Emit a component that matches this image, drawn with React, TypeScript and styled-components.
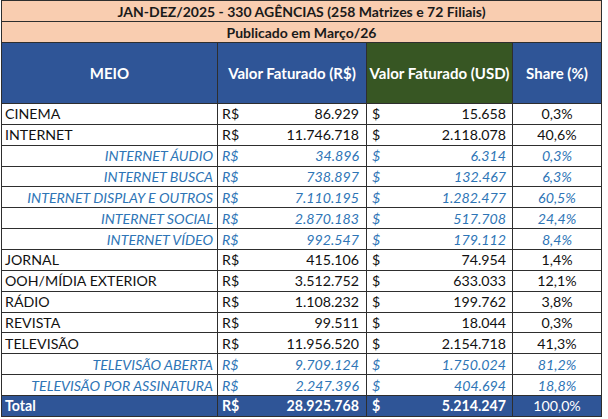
import React from "react";
import styled, { createGlobalStyle, css } from "styled-components";

const Global = createGlobalStyle`
  html, body { margin: 0; padding: 0; background: #ffffff; }
  body { font-family: Lato, "Liberation Sans", sans-serif; }
`;

type Row = { meio: string; brl: string; usd: string; share: string; sub?: boolean };

const rows: Row[] = [
  { meio: "CINEMA", brl: "86.929", usd: "15.658", share: "0,3%" },
  { meio: "INTERNET", brl: "11.746.718", usd: "2.118.078", share: "40,6%" },
  { meio: "INTERNET ÁUDIO", brl: "34.896", usd: "6.314", share: "0,3%", sub: true },
  { meio: "INTERNET BUSCA", brl: "738.897", usd: "132.467", share: "6,3%", sub: true },
  { meio: "INTERNET DISPLAY E OUTROS", brl: "7.110.195", usd: "1.282.477", share: "60,5%", sub: true },
  { meio: "INTERNET SOCIAL", brl: "2.870.183", usd: "517.708", share: "24,4%", sub: true },
  { meio: "INTERNET VÍDEO", brl: "992.547", usd: "179.112", share: "8,4%", sub: true },
  { meio: "JORNAL", brl: "415.106", usd: "74.954", share: "1,4%" },
  { meio: "OOH/MÍDIA EXTERIOR", brl: "3.512.752", usd: "633.033", share: "12,1%" },
  { meio: "RÁDIO", brl: "1.108.232", usd: "199.762", share: "3,8%" },
  { meio: "REVISTA", brl: "99.511", usd: "18.044", share: "0,3%" },
  { meio: "TELEVISÃO", brl: "11.956.520", usd: "2.154.718", share: "41,3%" },
  { meio: "TELEVISÃO ABERTA", brl: "9.709.124", usd: "1.750.024", share: "81,2%", sub: true },
  { meio: "TELEVISÃO POR ASSINATURA", brl: "2.247.396", usd: "404.694", share: "18,8%", sub: true },
];

const LINE = "#2e2e2e";

const Sheet = styled.div`
  margin-left: 1px;
  width: 600px;
  border-left: 1px solid ${LINE};
  border-top: 1px solid ${LINE};
  display: grid;
  grid-template-columns: 216px 149px 146px 89px;
  grid-template-rows: 21px 21px 61px repeat(15, 20.87px);
  font-size: 14.2px;
  color: #111;
`;

const Cell = styled.div<{ $bg?: string }>`
  box-sizing: border-box;
  border-right: 1px solid ${LINE};
  border-bottom: 1px solid ${LINE};
  background: ${(p) => p.$bg || "#ffffff"};
  display: flex;
  align-items: center;
  white-space: nowrap;
  overflow: hidden;
`;

const TitleCell = styled(Cell)`
  grid-column: 1 / -1;
  justify-content: center;
  background: #f9cdb0;
  font-weight: 700;
  font-size: 14px;
  color: #1a1a1a;
`;

const HeadCell = styled(Cell)`
  justify-content: center;
  color: #ffffff;
  font-weight: 700;
  font-size: 15px;
`;

const MeioCell = styled(Cell)<{ $sub?: boolean; $total?: boolean }>`
  padding: 0 4px 0 3px;
  justify-content: ${(p) => (p.$sub ? "flex-end" : "flex-start")};
  ${(p) =>
    p.$sub &&
    css`
      color: #2e75b6;
      font-style: italic;
    `}
  ${(p) =>
    p.$total &&
    css`
      color: #ffffff;
      font-weight: 700;
    `}
`;

const MoneyCell = styled(Cell)<{ $sub?: boolean; $total?: boolean; $l: number; $r: number }>`
  justify-content: space-between;
  padding: 0 ${(p) => p.$r}px 0 ${(p) => p.$l}px;
  ${(p) =>
    p.$sub &&
    css`
      color: #2e75b6;
      font-style: italic;
    `}
  ${(p) =>
    p.$total &&
    css`
      color: #ffffff;
      font-weight: 700;
    `}
`;

const ShareCell = styled(Cell)<{ $sub?: boolean; $total?: boolean }>`
  justify-content: center;
  ${(p) =>
    p.$sub &&
    css`
      color: #2e75b6;
      font-style: italic;
    `}
  ${(p) =>
    p.$total &&
    css`
      color: #ffffff;
    `}
`;

const BLUE = "#2f5597";
const GREEN = "#375623";

export default function App() {
  return (
    <>
      <Global />
      <Sheet>
        <TitleCell>JAN-DEZ/2025 - 330 AGÊNCIAS (258 Matrizes e 72 Filiais)</TitleCell>
        <TitleCell>Publicado em Março/26</TitleCell>
        <HeadCell $bg={BLUE}>MEIO</HeadCell>
        <HeadCell $bg={BLUE}>Valor Faturado (R$)</HeadCell>
        <HeadCell $bg={GREEN}>Valor Faturado (USD)</HeadCell>
        <HeadCell $bg={BLUE}>Share (%)</HeadCell>
        {rows.map((r) => (
          <React.Fragment key={r.meio}>
            <MeioCell $sub={r.sub}>{r.meio}</MeioCell>
            <MoneyCell $sub={r.sub} $l={4} $r={7}>
              <span>R$</span>
              <span>{r.brl}</span>
            </MoneyCell>
            <MoneyCell $sub={r.sub} $l={5} $r={6}>
              <span>$</span>
              <span>{r.usd}</span>
            </MoneyCell>
            <ShareCell $sub={r.sub}>{r.share}</ShareCell>
          </React.Fragment>
        ))}
        <MeioCell $total $bg={BLUE}>Total</MeioCell>
        <MoneyCell $total $bg={BLUE} $l={4} $r={7}>
          <span>R$</span>
          <span>28.925.768</span>
        </MoneyCell>
        <MoneyCell $total $bg={BLUE} $l={5} $r={6}>
          <span>$</span>
          <span>5.214.247</span>
        </MoneyCell>
        <ShareCell $total $bg={BLUE}>100,0%</ShareCell>
      </Sheet>
    </>
  );
}
